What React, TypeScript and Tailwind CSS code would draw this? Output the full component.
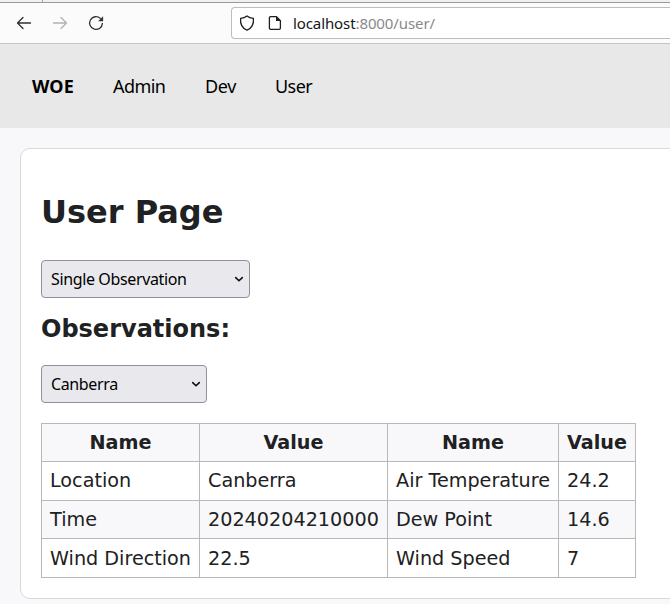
import React from 'react';

const rows = [
  ['Location', 'Canberra', 'Air Temperature', '24.2'],
  ['Time', '20240204210000', 'Dew Point', '14.6'],
  ['Wind Direction', '22.5', 'Wind Speed', '7'],
];
const heights = ['h-[39px]', 'h-[38px]', 'h-[39px]'];
const cellPadding = ['pt-0', 'pt-0', 'pt-px'];

function Toolbar() {
  return (
    <div>
      <div className="flex h-[3px] border-b border-[#9b9b9b] bg-[#f0f0f0]">
        <div className="w-[43px] border-r border-[#a5a5a5]" />
      </div>
      <div className="flex h-[41px] items-center border-b border-[#c5c5c5] bg-[#fbfbfb] pl-4">
        <svg className="h-4 w-4" viewBox="0 0 16 16" fill="none" stroke="#303030" strokeWidth="1.3" strokeLinecap="round" strokeLinejoin="round">
          <path d="M14.5 8H1.5M7 2.5L1.5 8L7 13.5" />
        </svg>
        <svg className="ml-5 h-4 w-4" viewBox="0 0 16 16" fill="none" stroke="#b2b2b2" strokeWidth="1.3" strokeLinecap="round" strokeLinejoin="round">
          <path d="M1.5 8H14.5M9 2.5L14.5 8L9 13.5" />
        </svg>
        <svg className="ml-5 h-4 w-4" viewBox="0 0 16 16" fill="none" stroke="#303030" strokeWidth="1.3" strokeLinecap="round">
          <path d="M12.2 3.2A6.4 6.4 0 1 0 14.4 8.4" />
          <path d="M15.1 1.2V6.2H10.1Z" fill="#303030" stroke="none" />
        </svg>
        <div className="ml-[127px] flex h-8 flex-1 items-center rounded-l-[4px] border border-r-0 border-[#bdbdbd] bg-white pl-[7px]">
          <svg className="h-4 w-4" viewBox="0 0 16 16" fill="none" stroke="#202020" strokeWidth="1.3" strokeLinejoin="round">
            <path d="M8 .9C6.2 2.4 3.7 3.1 1.6 3.3C1.1 8.7 3.1 13.3 8 15.1C12.9 13.3 14.9 8.7 14.4 3.3C12.3 3.1 9.8 2.4 8 .9Z" />
          </svg>
          <svg className="ml-3 h-4 w-4" viewBox="0 0 16 16" fill="none" stroke="#202020" strokeWidth="1.3" strokeLinejoin="round">
            <path d="M9.5 1.7H3.7Q2.4 1.7 2.4 3V13Q2.4 14.3 3.7 14.3H12.1Q13.4 14.3 13.4 13V5.6Z" />
            <path d="M9 1.2V6H14Z" fill="#202020" stroke="none" />
          </svg>
          <span className="ml-[10px] whitespace-pre font-['Noto_Sans',sans-serif] text-[15px] leading-5 tracking-[-0.1px] text-[#8a8a8a]">
            <span className="text-[#151515]">localhost</span>:8000/user/
          </span>
        </div>
      </div>
    </div>
  );
}

function Select({ value, width }: { value: string; width: string }) {
  return (
    <button className={`flex h-[38px] items-center justify-between rounded-[4px] border border-[#8f8f9d] bg-[#e9e9ed] pr-[5px] pl-[9px] font-['Noto_Sans',sans-serif] text-base leading-5 text-black ${width}`}>
      <span className="tracking-[-0.37px]">{value}</span>
      <svg className="h-[10px] w-[10px]" viewBox="0 0 10 10" fill="none" stroke="#111" strokeWidth="1.6" strokeLinecap="round" strokeLinejoin="round">
        <path d="M1.7 3.6L5 6.8L8.3 3.6" />
      </svg>
    </button>
  );
}

export default function App() {
  return (
    <div className="h-[604px] w-full overflow-hidden bg-[#f8f8fb] font-['DejaVu_Sans',sans-serif] text-[#202122]">
      <Toolbar />
      <nav className="flex h-[84px] items-center bg-[#e8e8e8] pl-8 font-['Noto_Sans',sans-serif] text-lg text-black">
        <b className="w-[81px] tracking-[0.1px]">WOE</b>
        <a className="w-[92px] tracking-[-0.55px]">Admin</a>
        <a className="w-[70px] tracking-[-0.3px]">Dev</a>
        <a className="tracking-[-0.55px]">User</a>
      </nav>
      <main className="mt-5 -mr-5 ml-5 flex h-[451px] flex-col items-start rounded-[10px] border border-[#d8d8dc] bg-white pl-5">
        <h1 className="mt-[43px] text-[32px] leading-10 font-bold">User Page</h1>
        <div className="mt-[28px]"><Select value="Single Observation" width="w-[209px]" /></div>
        <h2 className="mt-[15px] text-2xl leading-8 font-bold">Observations:</h2>
        <div className="mt-5"><Select value="Canberra" width="w-[166px]" /></div>
        <table className="mt-5 w-[595px] table-fixed border-collapse text-[19.2px] leading-6 whitespace-nowrap">
          <colgroup>
            <col className="w-[158px]" />
            <col className="w-[188px]" />
            <col className="w-[171px]" />
            <col className="w-[77px]" />
          </colgroup>
          <thead>
            <tr className="h-[38px] bg-[#f8f8fb]">
              {['Name', 'Value', 'Name', 'Value'].map((h, i) => (
                <th key={i} className="border border-[#b8b8b8] p-0 text-center font-bold">{h}</th>
              ))}
            </tr>
          </thead>
          <tbody>
            {rows.map((r, i) => (
              <tr key={r[0]} className={`${heights[i]} ${i === 1 ? 'bg-[#f8f8fb]' : 'bg-white'}`}>
                {r.map((c) => (
                  <td key={c} className={`border border-[#b8b8b8] pr-0 pb-0 pl-2 ${cellPadding[i]}`}>{c}</td>
                ))}
              </tr>
            ))}
          </tbody>
        </table>
      </main>
    </div>
  );
}
